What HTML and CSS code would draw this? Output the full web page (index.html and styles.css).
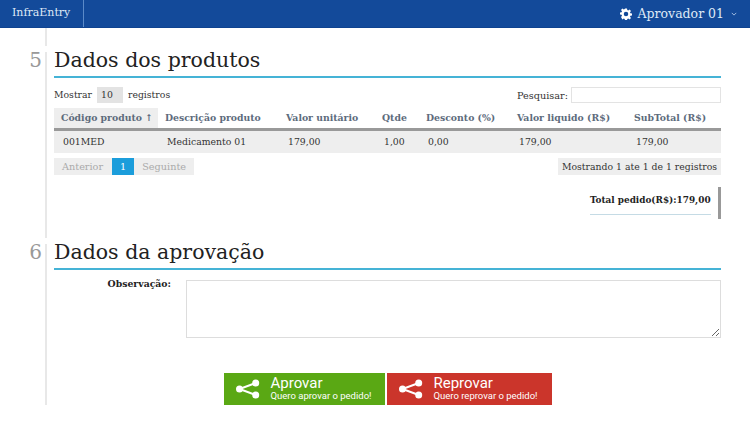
FILE: index.html
```html
<!DOCTYPE html>
<html lang="en">
  <head>
    <meta charset="UTF-8" />
    <title>InfraEntry</title>
    <link rel="stylesheet" href="styles.css">
  </head>
  <body>
    <div class="topbar">
      <div class="brand">InfraEntry</div>
      <div class="user">
        <svg class="gear" viewBox="0 0 24 24"><path fill-rule="evenodd" d="M10 1h4l.6 3.200 1.900.8L19.200 3 22 5.800l-2 2.700.8 1.900 3.200.6v4l-3.200.6-.8 1.900 2 2.700-2.800 2.800-2.700-2-1.900.8-.6 3.200h-4l-.6-3.200-1.900-.8-2.700 2L2 18.200l2-2.700-.8-1.900L0 13V9l3.200-.6.8-1.900-2-2.700L4.800 1l2.700 2 1.900-.8zM12 7.500a4.500 4.500 0 1 0 0 9 4.500 4.500 0 0 0 0-9z"/></svg>
        <span class="user-name">Aprovador 01</span>
        <svg class="caret" viewBox="0 0 8 5"><path d="M1 1l3 3 3-3" fill="none" stroke="#cfe0f5" stroke-width="1"/></svg>
      </div>
    </div>

    <div class="stub"></div>

    <div class="section">
      <div class="section-title"><span class="num">5</span><h2>Dados dos produtos</h2></div>

      <div class="table-tools">
        <div class="length">Mostrar <span class="length-box">10</span> registros</div>
        <div class="search">Pesquisar: <input type="text" /></div>
      </div>

      <table class="grid">
        <thead>
          <tr>
            <th class="sorted c1">Código produto ↑</th>
            <th class="c2">Descrição produto</th>
            <th class="c3">Valor unitário</th>
            <th class="c4">Qtde</th>
            <th class="c5">Desconto (%)</th>
            <th class="c6">Valor liquido (R$)</th>
            <th class="c7">SubTotal (R$)</th>
          </tr>
        </thead>
        <tbody>
          <tr>
            <td>001MED</td>
            <td>Medicamento 01</td>
            <td>179,00</td>
            <td>1,00</td>
            <td>0,00</td>
            <td>179,00</td>
            <td>179,00</td>
          </tr>
        </tbody>
      </table>

      <div class="table-foot">
        <div class="pager">
          <span class="page-btn">Anterior</span>
          <span class="page-btn current">1</span>
          <span class="page-btn">Seguinte</span>
        </div>
        <div class="info">Mostrando 1 ate 1 de 1 registros</div>
      </div>

      <div class="total-row">
        <div class="total">Total pedido(R$):179,00</div>
      </div>
    </div>

    <div class="section second">
      <div class="section-title"><span class="num">6</span><h2>Dados da aprovação</h2></div>

      <div class="obs">
        <label for="obs">Observação:</label>
        <textarea id="obs"></textarea>
      </div>

      <div class="actions">
        <a class="action green" href="#">
          <svg class="share" viewBox="0 0 24 20"><path d="M19.700 4L3.500 10l16.200 6" fill="none" stroke="#fff" stroke-width="2"/><circle cx="19.700" cy="4" r="3.500" fill="#fff"/><circle cx="3.500" cy="10" r="3.500" fill="#fff"/><circle cx="19.700" cy="16" r="3.500" fill="#fff"/></svg>
          <span class="action-text"><b>Aprovar</b><small>Quero aprovar o pedido!</small></span>
        </a>
        <a class="action red" href="#">
          <svg class="share" viewBox="0 0 24 20"><path d="M19.700 4L3.500 10l16.200 6" fill="none" stroke="#fff" stroke-width="2"/><circle cx="19.700" cy="4" r="3.500" fill="#fff"/><circle cx="3.500" cy="10" r="3.500" fill="#fff"/><circle cx="19.700" cy="16" r="3.500" fill="#fff"/></svg>
          <span class="action-text"><b>Reprovar</b><small>Quero reprovar o pedido!</small></span>
        </a>
      </div>
    </div>
  </body>
</html>
```

FILE: styles.css
```css
* {
  margin: 0;
  padding: 0;
  box-sizing: border-box;
}

body {
  font-family: "DejaVu Serif", serif;
  background: white;
  color: #333;
  font-size: 9.300px;
  height: 422px;
  overflow: hidden;
}

.topbar {
  height: 28px;
  background: #134a9a;
  border-bottom: 1px solid #0f4390;
  display: flex;
  align-items: center;
  justify-content: space-between;
  color: #dfe9f6;
}

.brand {
  width: 84px;
  height: 100%;
  padding: 0 12px;
  line-height: 26px;
  font-size: 11px;
  border-right: 1px solid #5b8ac8;
}

.user {
  display: flex;
  align-items: center;
  padding-right: 13px;
}

.gear {
  width: 12px;
  height: 12px;
  fill: white;
  margin-right: 6px;
}

.user-name {
  font-size: 12.500px;
}

.caret {
  width: 6px;
  height: 4px;
  margin-left: 7px;
}

.stub {
  height: 18px;
  width: 2px;
  margin-left: 45px;
  background: #e8e8e8;
}

.section {
  margin: 6px 29px 0 45px;
  padding-left: 7px;
  border-left: 2px solid #e8e8e8;
  height: 186px;
}

.section.second {
  height: 161px;
}

.section-title {
  display: flex;
  align-items: flex-start;
  height: 26px;
  border-bottom: 2px solid #45b3d6;
}

.num {
  width: 24px;
  margin-left: -31px;
  margin-right: 7px;
  text-align: right;
  padding-right: 5px;
  font-size: 20px;
  line-height: 17px;
  color: #999;
}

h2 {
  font-weight: normal;
  font-size: 20.500px;
  line-height: 17px;
  color: #222;
}

.table-tools {
  display: flex;
  justify-content: space-between;
  align-items: center;
  margin-top: 9px;
  height: 16px;
}

.length-box {
  display: inline-block;
  width: 26px;
  height: 16px;
  line-height: 16px;
  margin: 0 2px;
  padding-left: 4px;
  background: #e3e3e3;
}

.search {
  display: flex;
  align-items: center;
  gap: 3px;
  font-size: 9.700px;
}

.search input {
  width: 150px;
  height: 16px;
  border: 1px solid #e3e3e3;
}

.grid {
  width: 100%;
  margin-top: 5px;
  border-collapse: collapse;
  table-layout: fixed;
}

.grid th {
  height: 21px;
  padding-left: 7px;
  padding-bottom: 1px;
  text-align: left;
  font-size: 9.300px;
  color: #5d6b7c;
  border-bottom: 3px solid #999;
  white-space: nowrap;
}

.grid th.sorted {
  background: #eee;
}

.grid td {
  height: 24px;
  padding-left: 9px;
  padding-bottom: 1px;
  background: #eee;
}

.c1 { width: 104px; }
.c2 { width: 121px; }
.c3 { width: 96px; }
.c4 { width: 44px; }
.c5 { width: 91px; }
.c6 { width: 117px; }
.c7 { width: 94px; }

.table-foot {
  display: flex;
  justify-content: space-between;
  margin-top: 5px;
}

.pager {
  display: flex;
}

.page-btn {
  height: 17px;
  line-height: 17px;
  padding: 0 8px;
  font-size: 9.700px;
  background: #eee;
  color: #aaa;
}

.page-btn:first-child {
  padding-right: 9px;
}

.page-btn.current {
  background: #1b9ddb;
  color: white;
}

.info {
  height: 17px;
  line-height: 17px;
  padding: 0 4px;
  background: #eee;
}

.total-row {
  display: flex;
  justify-content: flex-end;
  margin-top: 12px;
  border-right: 3px solid #999;
  height: 32px;
  padding-right: 7px;
}

.total {
  width: 121px;
  height: 28px;
  line-height: 26px;
  font-size: 8.900px;
  font-weight: bold;
  color: #222;
  white-space: nowrap;
  border-bottom: 1px solid #c5dbe5;
}

.obs {
  display: flex;
  margin-top: 10px;
}

.obs label {
  width: 117px;
  margin-top: -2px;
  text-align: right;
  font-weight: bold;
  color: #222;
}

.obs textarea {
  margin-left: 15px;
  flex: 1;
  height: 58px;
  border: 1px solid #ddd;
}

.actions {
  display: flex;
  justify-content: center;
  gap: 2px;
  margin-top: 35px;
}

.action {
  display: flex;
  align-items: center;
  height: 32px;
  padding-left: 12px;
  color: white;
  text-decoration: none;
  font-family: Roboto, sans-serif;
}

.action.green {
  width: 161px;
  background: #5aa814;
}

.action.red {
  width: 165px;
  background: #cb352b;
}

.share {
  width: 24px;
  height: 20px;
  margin-right: 11px;
}

.action-text {
  padding-bottom: 2px;
}

.action-text b {
  display: block;
  font-weight: normal;
  font-size: 15px;
  line-height: 14px;
}

.action-text small {
  display: block;
  font-size: 9.500px;
  line-height: 11px;
}
```
